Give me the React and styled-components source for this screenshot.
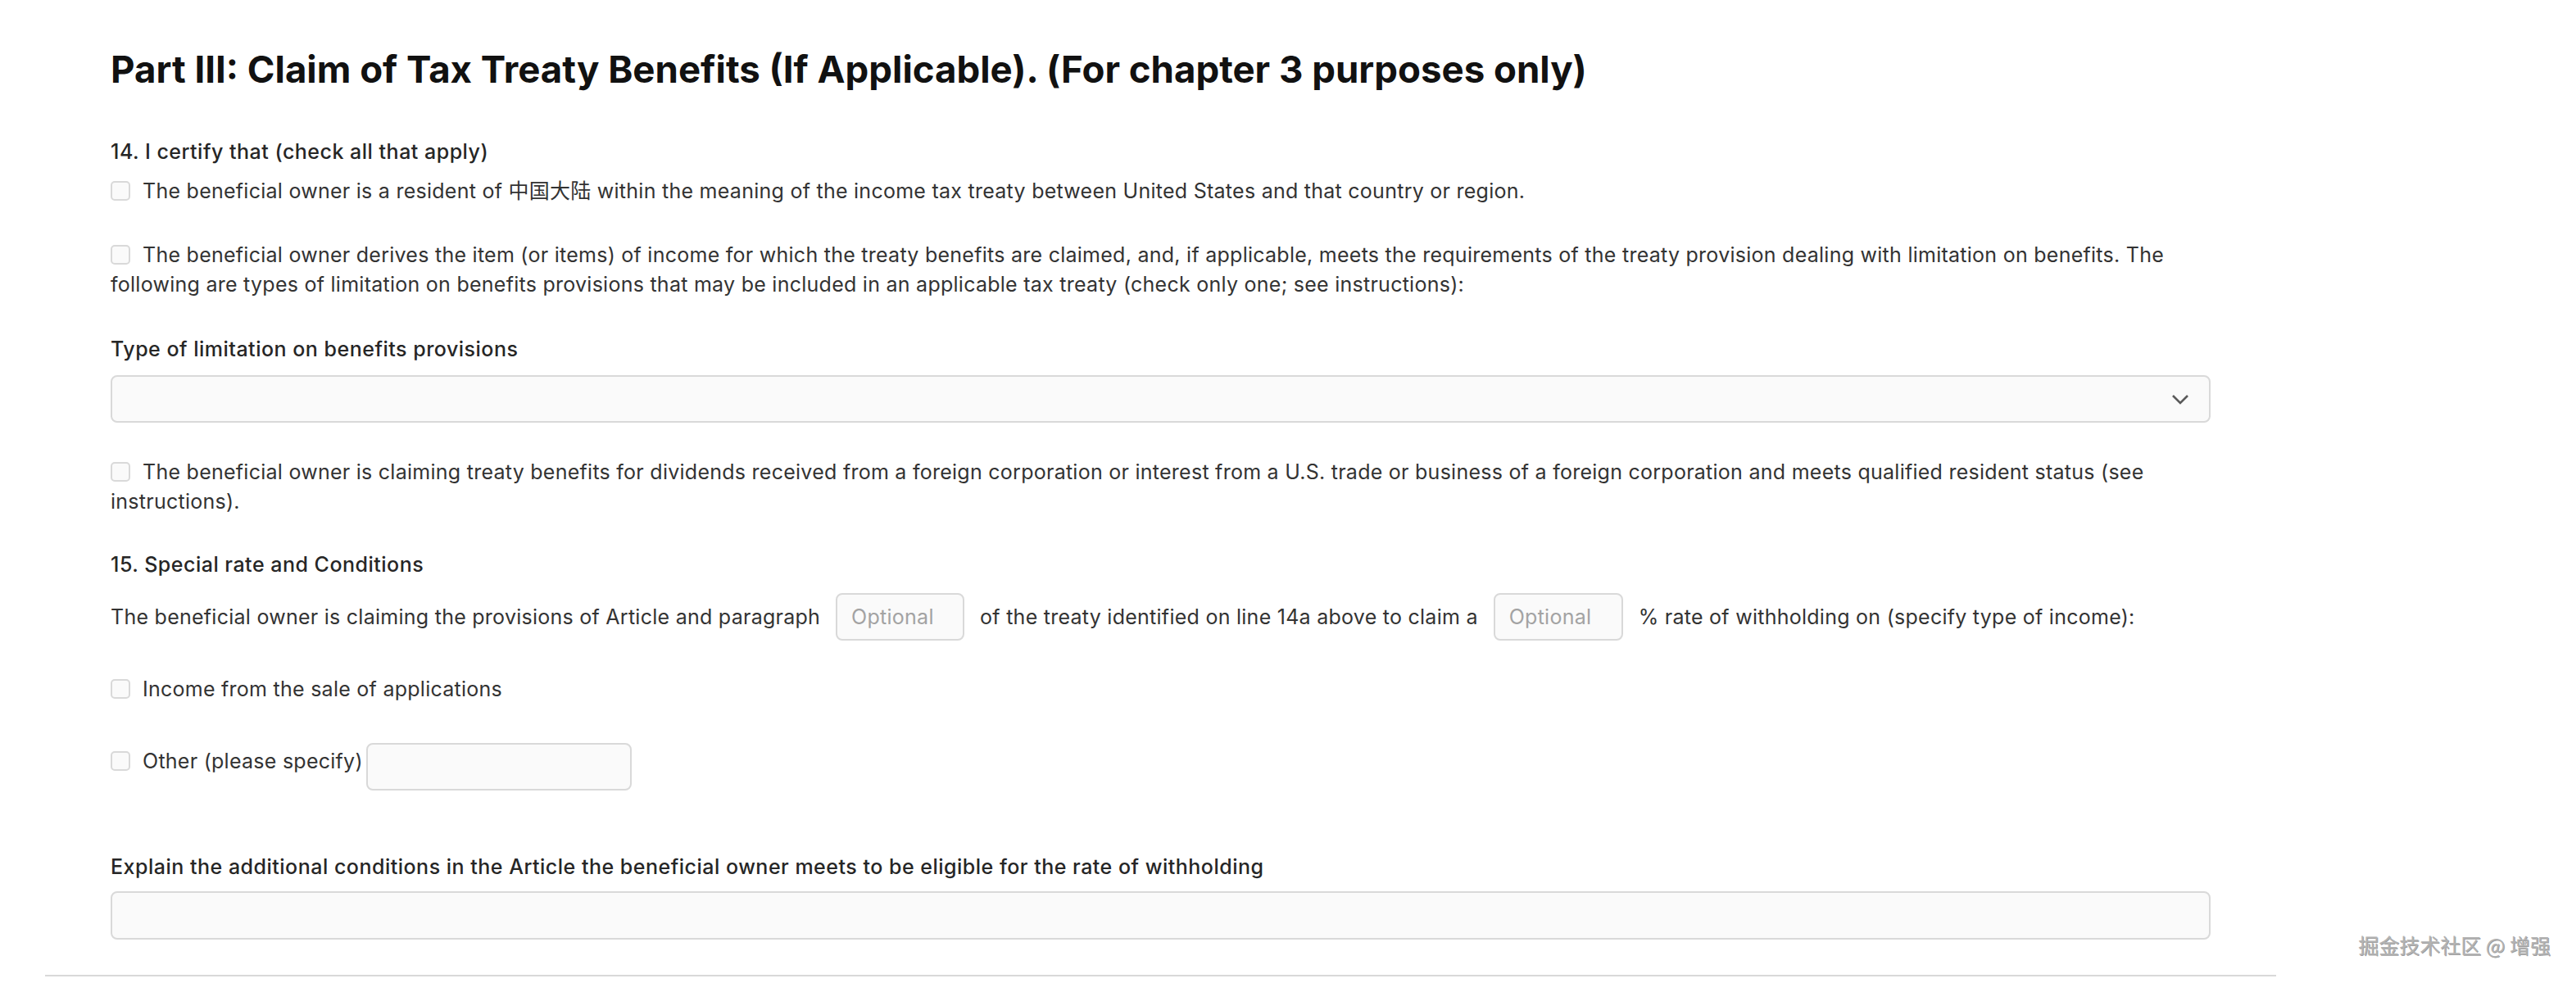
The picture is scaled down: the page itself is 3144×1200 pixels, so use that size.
import React from "react";
import styled, { createGlobalStyle } from "styled-components";

const GlobalStyle = createGlobalStyle`
  html, body {
    margin: 0;
    padding: 0;
    background: #ffffff;
  }
  body {
    font-family: Inter, "Noto Sans", "Noto Sans CJK SC", sans-serif;
    color: #333333;
    -webkit-font-smoothing: antialiased;
  }
`;

const Page = styled.div`
  padding-left: 55px;
`;

const Form = styled.div`
  width: 2723px;
  box-sizing: border-box;
  padding: 0 80px 43px;
  border-bottom: 2px solid #d9d9d9;
  font-size: 25px;
  letter-spacing: 0.26px;
`;

const Title = styled.h1`
  margin: 57px 0 0;
  font-size: 45.6px;
  line-height: 55px;
  font-weight: 700;
  letter-spacing: 0;
  color: #111111;
`;

const SectionLabel = styled.div`
  margin-top: ${(p) => p.$top}px;
  line-height: 36px;
  font-weight: 500;
  letter-spacing: 0.5px;
  color: #262626;
`;

const CheckRow = styled.div`
  margin-top: ${(p) => p.$top}px;
  line-height: 36px;
  color: #333333;
`;

const Box = styled.span`
  display: inline-block;
  width: 24px;
  height: 24px;
  box-sizing: border-box;
  margin: 6px 15px 0 0;
  vertical-align: top;
  border: 2px solid #d9d9d9;
  border-radius: 5px;
  background: #fafafa;
`;

const Field = styled.div`
  margin-top: ${(p) => p.$top || 0}px;
  width: ${(p) => p.$width || "100%"};
  height: ${(p) => p.$height || 58}px;
  box-sizing: border-box;
  border: 2px solid #d9d9d9;
  border-radius: 8px;
  background: #fafafa;
  display: flex;
  align-items: center;
  justify-content: space-between;
  padding: 0 24px 0 17px;
  flex-shrink: 0;
`;

const Placeholder = styled.span`
  color: #a3a3a3;
`;

const InlineRow = styled.div`
  margin-top: ${(p) => p.$top}px;
  display: flex;
  align-items: center;
  gap: 19px;
  line-height: 36px;
  color: #333333;
`;

const OtherRow = styled.div`
  margin-top: ${(p) => p.$top}px;
  display: flex;
  align-items: flex-start;
  line-height: 36px;
  color: #333333;
`;

const OtherText = styled.span`
  margin: 4px 4px 0 0;
`;

const Watermark = styled.div`
  position: absolute;
  right: 31px;
  top: 1141px;
  font-family: "Noto Sans CJK SC", sans-serif;
  font-size: 25px;
  line-height: 25px;
  font-weight: 400;
  color: #b3b3b3;
  text-shadow: 1px 1px 0 rgba(0, 0, 0, 0.4);
`;

const Chevron = () => (
  <svg width="22" height="13" viewBox="0 0 22 13" fill="none">
    <path d="M2 2 L11 11 L20 2" stroke="#5a5a5a" strokeWidth="2.6" />
  </svg>
);

export default function App() {
  return (
    <Page>
      <GlobalStyle />
      <Form>
        <Title>
          Part III: Claim of Tax Treaty Benefits (If Applicable). (For chapter 3 purposes only)
        </Title>
        <SectionLabel $top={55}>14. I certify that (check all that apply)</SectionLabel>
        <CheckRow $top={12}>
          <Box />
          The beneficial owner is a resident of 中国大陆 within the meaning of the income tax
          treaty between United States and that country or region.
        </CheckRow>
        <CheckRow $top={42}>
          <Box />
          The beneficial owner derives the item (or items) of income for which the treaty
          benefits are claimed, and, if applicable, meets the requirements of the treaty
          provision dealing with limitation on benefits. The following are types of limitation
          on benefits provisions that may be included in an applicable tax treaty (check only
          one; see instructions):
        </CheckRow>
        <SectionLabel $top={43}>Type of limitation on benefits provisions</SectionLabel>
        <Field $top={14}>
          <span />
          <Chevron />
        </Field>
        <CheckRow $top={42}>
          <Box />
          The beneficial owner is claiming treaty benefits for dividends received from a
          foreign corporation or interest from a U.S. trade or business of a foreign corporation
          and meets qualified resident status (see instructions).
        </CheckRow>
        <SectionLabel $top={41}>15. Special rate and Conditions</SectionLabel>
        <InlineRow $top={17}>
          <span>
            The beneficial owner is claiming the provisions of Article and paragraph
          </span>
          <Field $width="157px">
            <Placeholder>Optional</Placeholder>
          </Field>
          <span>of the treaty identified on line 14a above to claim a</span>
          <Field $width="158px">
            <Placeholder>Optional</Placeholder>
          </Field>
          <span>% rate of withholding on (specify type of income):</span>
        </InlineRow>
        <CheckRow $top={41}>
          <Box />
          Income from the sale of applications
        </CheckRow>
        <OtherRow $top={48}>
          <Box style={{ marginTop: 10 }} />
          <OtherText>Other (please specify)</OtherText>
          <Field $width="324px" />
        </OtherRow>
        <SectionLabel $top={75}>
          Explain the additional conditions in the Article the beneficial owner meets to be
          eligible for the rate of withholding
        </SectionLabel>
        <Field $top={12} $height={59} />
      </Form>
      <Watermark>掘金技术社区 @ 增强</Watermark>
    </Page>
  );
}
